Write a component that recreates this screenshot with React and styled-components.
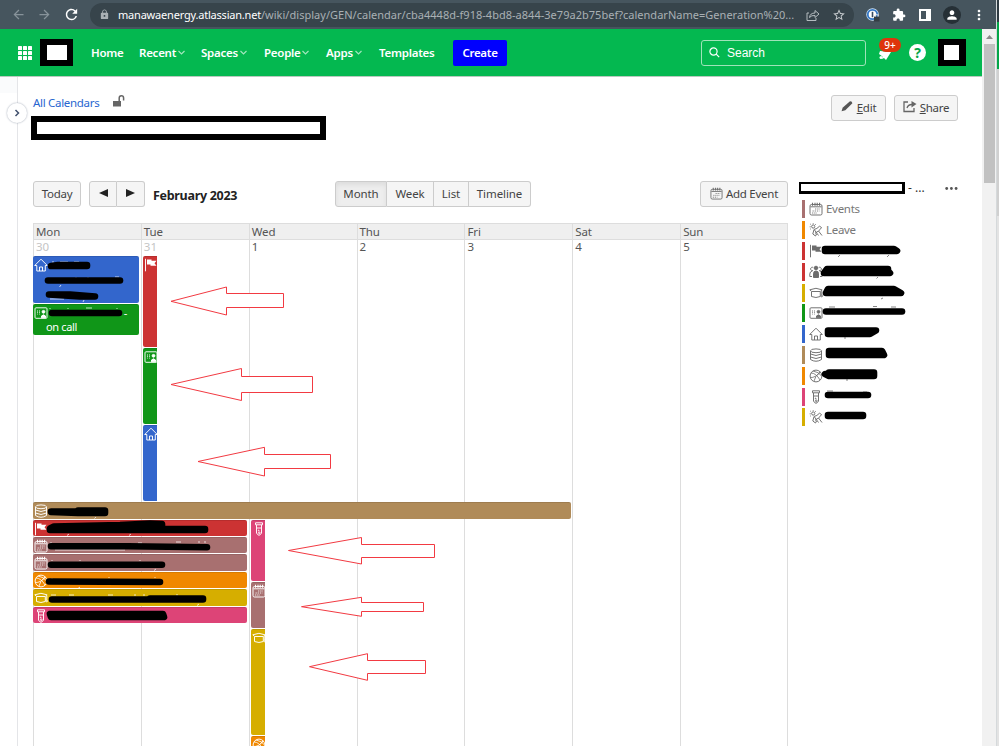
import React from 'react'
import styled, { createGlobalStyle } from 'styled-components'
import { MdArrowBack, MdArrowForward, MdRefresh, MdLock, MdStarBorder, MdExtension, MdPerson, MdMoreVert } from 'react-icons/md'

const GlobalStyle = createGlobalStyle`
  * { box-sizing: border-box; }
  body {
    margin: 0;
    overflow: hidden;
    background: #fff;
    font-family: 'Noto Sans', 'Open Sans', sans-serif;
    font-size: 12px;
    color: #333;
  }
  svg { display: block; flex: none; }
`

const Screen = styled.div`
  position: relative;
  display: flex;
  width: 999px;
  height: 746px;
  overflow: hidden;
`
const Browser = styled.div`
  width: 996px;
  display: flex;
  flex-direction: column;
`
const Edge = styled.div`
  width: 3px;
  border-left: 1px solid #d5d9db;
  background: linear-gradient(#2f3b42 0 22px, #04a648 22px 69px, #d0d0d0 69px 216px, #e3e3e3 216px);
`
const Toolbar = styled.div`
  height: 29px;
  display: flex;
  align-items: center;
  padding-left: 11px;
  background: #46555e;
  color: #fff;
`
const ToolIcon = styled.span`
  width: ${p => p.$w || 26}px;
  flex: none;
  display: flex;
  justify-content: center;
  color: ${p => p.$color || '#fff'};
`
const AddressBar = styled.div`
  width: 764px;
  height: 24px;
  margin: 0 5px 0 0;
  padding-left: 8px;
  display: flex;
  align-items: center;
  border-radius: 12px;
  background: #37444b;
  color: #a9b0b4;
`
const Url = styled.div`
  width: 685px;
  flex: none;
  margin: -1px 0 0 7px;
  white-space: nowrap;
  letter-spacing: 0.02px;
  font-size: 11px;
`
const Host = styled.span`
  color: #fff;
  letter-spacing: -0.2px;
`
const Avatar = styled.span`
  width: 18px;
  height: 18px;
  display: flex;
  align-items: center;
  justify-content: center;
  border-radius: 50%;
  background: #263036;
`
const Viewport = styled.div`
  flex: 1;
  display: flex;
  min-height: 0;
`
const Site = styled.div`
  width: 982px;
  display: flex;
  flex-direction: column;
`
const Scrollbar = styled.div`
  width: 14px;
  padding: 6px 1px 0 2px;
  display: flex;
  flex-direction: column;
  align-items: center;
  background: #f1f1f1;
`
const Thumb = styled.div`
  width: 11px;
  height: 139px;
  margin-top: 5px;
  background: #c1c1c1;
`
const Header = styled.header`
  height: 48px;
  flex: none;
  padding-left: 18px;
  display: flex;
  align-items: center;
  background: #04b850;
  border-bottom: 1px solid #b9c9bf;
  color: #fff;
`
const Blackout = styled.div`
  width: ${p => p.$w}px;
  height: ${p => p.$h}px;
  flex: none;
  margin-left: ${p => p.$ml || 0}px;
  margin-right: ${p => p.$mr || 0}px;
  border-style: solid;
  border-color: #000;
  border-width: ${p => p.$b || '6px'};
  background: #fff;
`
const Nav = styled.nav`
  display: flex;
  align-items: center;
  margin-left: 18px;
`
const NavItem = styled.span`
  width: ${p => p.$w}px;
  display: flex;
  align-items: center;
  justify-content: space-between;
  margin-right: ${p => p.$gap}px;
  font-size: 11.5px;
  font-weight: 600;
  letter-spacing: -0.25px;
  white-space: nowrap;
`
const CreateButton = styled.button`
  width: 54px;
  height: 26px;
  padding: 0;
  border: 0;
  border-radius: 2px;
  background: #0000fe;
  color: #fff;
  font: 600 11.5px 'Noto Sans', sans-serif;
  letter-spacing: -0.3px;
`
const SearchBox = styled.div`
  width: 165px;
  height: 26px;
  margin-left: auto;
  padding-left: 7px;
  display: flex;
  align-items: center;
  gap: 7px;
  border: 1px solid #9fe3b9;
  border-radius: 3px;
  font: 12px 'Liberation Sans', sans-serif;
`
const Notify = styled.span`
  position: relative;
  width: 20px;
  height: 20px;
  margin-left: 11px;
`
const Badge = styled.span`
  position: absolute;
  left: 2px;
  top: -5px;
  width: 22px;
  height: 14px;
  border-radius: 7px;
  background: #de350b;
  font-size: 10px;
  font-weight: 500;
  line-height: 14px;
  text-align: center;
`
const Help = styled.span`
  width: 17px;
  height: 17px;
  margin: 0 12px 0 12px;
  border-radius: 50%;
  background: #fff;
  color: #04a648;
  font-size: 14px;
  font-weight: 700;
  line-height: 17px;
  text-align: center;
`
const Body = styled.div`
  flex: 1;
  display: flex;
  min-height: 0;
`
const SideRail = styled.aside`
  position: relative;
  width: 18px;
  border-right: 1px solid #e4e5e8;
  background: linear-gradient(#fafbfc 0 16px, #fff 16px);
`
const Expand = styled.span`
  position: absolute;
  left: 7px;
  top: 26px;
  width: 20px;
  height: 20px;
  display: flex;
  align-items: center;
  justify-content: center;
  border-radius: 50%;
  background: #fff;
  box-shadow: 0 0 2px rgba(9, 30, 66, 0.4);
`
const Main = styled.main`
  flex: 1;
  display: flex;
  flex-direction: column;
  padding-left: 13px;
`
const PageTop = styled.div`
  display: flex;
  justify-content: space-between;
  height: 103px;
  padding: 18px 24px 0 0;
`
const Crumb = styled.div`
  display: flex;
  gap: 14px;
  height: 21px;
  padding-left: 2px;
  color: #2866d0;
  line-height: 16px;
  font-size: 11.5px;
  letter-spacing: -0.3px;
`
const Actions = styled.div`
  display: flex;
  gap: 8px;
`
const Button = styled.button`
  width: ${p => p.$w}px;
  height: 26px;
  padding: 0 0 1px;
  display: flex;
  align-items: center;
  justify-content: center;
  gap: 3px;
  border: 1px solid #ccc;
  border-radius: 3px;
  background: #f5f5f5;
  color: #444;
  font: 11.5px 'Noto Sans', sans-serif;
  letter-spacing: ${p => p.$ls || -0.25}px;
  white-space: nowrap;
`
const ButtonGroup = styled.div`
  display: flex;
  margin-left: ${p => p.$ml || 0}px;
  & > button { border-radius: 0; }
  & > button + button { border-left: 0; }
  & > button:first-child { border-radius: 3px 0 0 3px; }
  & > button:last-child { border-radius: 0 3px 3px 0; }
`
const ViewButton = styled(Button)`
  background: ${p => (p.$on ? '#eee' : '#f5f5f5')};
  box-shadow: ${p => (p.$on ? 'inset 0 3px 5px #ddd' : 'none')};
  letter-spacing: -0.1px;
`
const AddButton = styled(Button)`
  margin-left: auto;
`
const Columns = styled.div`
  flex: 1;
  display: flex;
  padding-left: 2px;
  min-height: 0;
`
const Calendar = styled.section`
  width: 755px;
  display: flex;
  flex-direction: column;
`
const CalendarBar = styled.div`
  display: flex;
  align-items: center;
  height: 43px;
  flex: none;
  padding-bottom: 16px;
`
const MonthTitle = styled.h2`
  width: 190px;
  margin: 3px 0 0;
  padding-left: 8px;
  font-size: 12.5px;
  font-weight: 700;
  letter-spacing: -0.3px;
  color: #222;
`
const Days = styled.div`
  display: grid;
  grid-template-columns: repeat(7, 1fr);
  grid-area: 1 / 1;
`
const WeekHead = styled(Days)`
  height: 17px;
  flex: none;
  background: #efefef;
  border: solid #ddd;
  border-width: 1px 0;
`
const DayName = styled.span`
  padding-left: 2px;
  border-left: 1px solid #ddd;
  color: #555;
  font-size: 11.5px;
  letter-spacing: -0.1px;
  line-height: 15px;
  &:last-child { border-right: 1px solid #ddd; }
`
const Day = styled.div`
  padding-left: 2px;
  border-left: 1px solid #ddd;
  color: ${p => (p.$other ? '#c4c4c4' : '#555')};
  font-size: 11.5px;
  line-height: 14px;
  &:last-child { border-right: 1px solid #ddd; }
`
const Month = styled.div`
  flex: 1;
  display: grid;
  min-height: 0;
`
const Events = styled.div`
  grid-area: 1 / 1;
  padding-top: 16px;
  height: 507px;
  overflow: hidden;
`
const EventRow = styled.div`
  display: flex;
  align-items: flex-start;
  gap: 4px;
  height: ${p => p.$h}px;
`
const Stack = styled.div`
  width: ${p => p.$w}px;
  display: flex;
  flex-direction: column;
  gap: 1px;
`
const Event = styled.div`
  height: ${p => p.$h}px;
  width: ${p => (p.$w ? p.$w + 'px' : '100%')};
  flex: none;
  padding: 1px 0 0 1px;
  overflow: hidden;
  border-radius: ${p => (p.$cut ? '2px 0 0 2px' : '2px')};
  border-top: 1px solid rgba(0, 0, 0, 0.1);
  background: ${p => p.$color};
  color: #fff;
`
const EventText = styled.div`
  display: flex;
  justify-content: space-between;
  padding: ${p => p.$pad};
  font-size: 11px;
  letter-spacing: -0.35px;
  line-height: 14px;
  height: 14px;
`
const Legend = styled.section`
  width: 182px;
  padding-left: 11px;
`
const LegendHead = styled.div`
  display: flex;
  align-items: center;
  height: 16px;
  margin-bottom: 3px;
  font-size: 12px;
  & > span { margin-left: 3px; width: 37px; line-height: 16px; }
`
const LegendItem = styled.div`
  display: flex;
  align-items: center;
  height: 20.8px;
  padding-left: 3px;
  color: #777;
  font-size: 11.5px;
  letter-spacing: -0.3px;
`
const Swatch = styled.i`
  width: 3px;
  height: 18px;
  margin-right: 4px;
  background: ${p => p.$color};
`
const LegendName = styled.span`
  margin: -2px 0 0 3px;
`
const Markup = styled.svg`
  position: absolute;
  left: 0;
  top: 0;
  pointer-events: none;
`

const colors = {
  mauve: '#a87070',
  orange: '#f08800',
  red: '#cc3333',
  yellow: '#d6ae00',
  green: '#109618',
  blue: '#3366cc',
  brown: '#b08b59',
  pink: '#dd4477',
}

const glyphs = {
  events: <><rect x="1" y="2.5" width="12" height="10.5" rx="1.5" /><path d="M1.500 4.800h11" /><path d="M3.500 .7v3M6 .7v3M8.200 .7v3M10.600 .7v3" strokeWidth="1.100" /><path d="M6 7h5M3.500 9h7M3 11h5" strokeDasharray="1.300 .9" opacity=".85" /></>,
  leave: <><circle cx="4.200" cy="3.500" r="1.600" /><path d="M4.200 .3v.8M1.300 1l.7.7M.7 3.800h1M7 1l-.7.7M1.300 6.200l.7-.7" /><path d="M5 6.500Q8 6 10.500 3.200L12.500 4.500Q11 7 9.500 8l3.500 4.500M5 6.500l-1.200 4.500L6.500 13l1-2-1.200-1L9.500 8M5.500 7l4 5.500" /></>,
  flag: <><path d="M1.500 .8v12.500" /><path d="M3 1.500h4.500v1.300H12.500l-2 2.400 2 2.500H6.500V6.500H3z" fill="currentColor" stroke="none" /></>,
  group: <><circle cx="7" cy="3" r="1.800" fill="currentColor" /><path d="M4.500 12.500V8.500Q4.500 6 7 6t2.500 2.500v4z" fill="currentColor" /><path d="M4 5.500a1.700 1.700 0 1 1 .2-3M10 5.500a1.700 1.700 0 1 0-.2-3M3 11.500H.8V9q0-2.500 2.500-3M11 11.500h2.200V9q0-2.500-2.500-3" /></>,
  cap: <><path d="M.8 3.800Q7 .8 13 3.800L11.300 5.500H2.700zM2.500 5.700v4.800Q7 12.500 11.300 10.500V5.700M12.800 4.500V9" /><circle cx="12.700" cy="10" r=".8" /></>,
  card: <><rect x="1" y="1.800" width="12" height="10.500" rx="1" /><path d="M3.500 4.500v4M5.500 4.500v4" strokeDasharray="1 .8" /><circle cx="9.500" cy="5.800" r="1.400" fill="currentColor" /><path d="M7.500 11.800V10q2-2.300 4 0v1.800z" fill="currentColor" /></>,
  home: <path d="M.7 7.500 7 1.200l6.300 6.300h-2V13H2.800V7.500zM5.500 13V9h3v4" />,
  data: <><ellipse cx="7" cy="2.800" rx="5.500" ry="1.900" /><path d="M1.500 3v8.500q5.500 3.500 11 0V3M1.500 6q5.500 3 11 0M1.500 9q5.500 3 11 0" /></>,
  ball: <><circle cx="7" cy="7" r="5.900" /><path d="M2 4q5 0 9 7M4 2q6 1 8.500 5M1.500 8.500Q6 9 11.500 3M5 12q1-5 6-9" strokeWidth=".8" /></>,
  tube: <><path d="M3.500 .8h7v2h-7zM4.500 3v8q2.500 4.500 5 0V3M5 6h4" /><circle cx="6.700" cy="8.500" r=".4" /><circle cx="7.300" cy="10.800" r=".8" /></>,
}

const Glyph = ({ name, size = 14, color = '#6c6c6c' }) => (
  <svg width={size} height={size} viewBox="0 0 14 14" fill="none" color={color} stroke="currentColor" strokeWidth="0.95">
    {glyphs[name]}
  </svg>
)

const White = ({ name }) => <Glyph name={name} color="#fff" />

const Chevron = () => (
  <svg width="7" height="5" viewBox="0 0 7 5" fill="none" stroke="#a2e7bc" strokeWidth="1.200"><path d="M.5 1l3 3 3-3" /></svg>
)

const nav = [
  { label: 'Home', w: 33, gap: 15 },
  { label: 'Recent', w: 46, gap: 16, menu: true },
  { label: 'Spaces', w: 46, gap: 17, menu: true },
  { label: 'People', w: 45, gap: 17, menu: true },
  { label: 'Apps', w: 36, gap: 17, menu: true },
  { label: 'Templates', w: 54, gap: 20 },
]

const week = [
  ['Mon', 30, true],
  ['Tue', 31, true],
  ['Wed', 1],
  ['Thu', 2],
  ['Fri', 3],
  ['Sat', 4],
  ['Sun', 5],
]

const longEvents = [
  ['flag', 'red'],
  ['events', 'mauve'],
  ['events', 'mauve'],
  ['ball', 'orange'],
  ['cap', 'yellow'],
  ['tube', 'pink'],
]

const legend = [
  ['events', 'mauve', 'Events'],
  ['leave', 'orange', 'Leave'],
  ['flag', 'red'],
  ['group', 'red'],
  ['cap', 'yellow'],
  ['card', 'green'],
  ['home', 'blue'],
  ['data', 'brown'],
  ['ball', 'orange'],
  ['tube', 'pink'],
  ['leave', 'yellow'],
]

// tip x, tip y, head x, head top, shaft top, right, shaft bottom, head bottom
const arrows = [
  [171, 301.3, 226.5, 287, 293.5, 283.5, 307.5, 315],
  [171, 384.5, 241.5, 368.5, 376.5, 312.5, 392.5, 400.5],
  [198, 461.5, 264.5, 447.3, 454.5, 330.5, 468.5, 476],
  [288.5, 550.5, 361.5, 537.5, 544.5, 434.5, 557.5, 564],
  [301.5, 606.7, 361.5, 597.3, 602.5, 423.5, 611.5, 616.3],
  [309.5, 666.7, 367.5, 653.7, 660.5, 425.5, 673.5, 680.3],
]

const scribbles = [
  'M51 266L58 265H87V266H52',
  'M48 280.5H120',
  'M49 294.5H70L95 296.500H80L49 294.5',
  'M52 313H119',
  'M51 511.5H78V510.5H105V513H78L51 512',
  'M50 528.5L54 526.5L120 525L150 523.5L162 524V529H205V530L50 530Z',
  'M51 546.3H128L207 547.3',
  'M51 564.7H162',
  'M49 581.5L160 582',
  'M52 599.5H203V598.5H150',
  'M50 614H163L164 617H51Z',
  'M825 249H894L897 251H825Z',
  'M827 269H888V271L890 273H824Z',
  'M828 289H894L901 293H826Z',
  'M826 311.500H902',
  'M828 330.5H876L870 334H828Z',
  'M829 351H882L884 355H829Z',
  'M825 374H829V372.5H874V376H829Z',
  'M828 395H868',
  'M828 415H863V416H828Z',
]

// bits of lettering left uncovered around the scribbles
const whiteSpecks = 'M52 262h2M60 262h8M74 262h5M61 285l-1.500 2M76 277v1M88 277v1M115 277h4M50 299h14M84 300l-1 2M50 308v1M68 308v1M86 308h6M117 308v1M82 508v1M87 508v1M96 517l-1.500 1.500M69 534l-2 1.500M131 534l-2 1.500M50 543h2M57 543v1M138 543h4M176 542h5M199 541v2M205 541v2M55 550h70M52 560v1M80 560v1M140 560v1M156 569l-2 1.500M52 578v1M109 577v1M155 577v1M80 587l-2 1.500M51 595h5M69 595h5M108 595h5M135 594v2M144 594v2M177 594v2M199 604l-2 1.500'
const graySpecks = 'M840 255l-2 2M889 255l-2 2M878 277l-1.500 1.500M883 298l-2 1M829 307h6M873 306.500h4M891 307h5M845 337v2M847 379v2M827 391h6M864 391v1M866 391v1'

const App = () => (
  <>
    <GlobalStyle />
    <Screen>
      <Browser>
        <Toolbar>
          <ToolIcon $w={14} $color="#87939a"><MdArrowBack size={15} /></ToolIcon>
          <ToolIcon $w={38} $color="#87939a"><MdArrowForward size={15} /></ToolIcon>
          <ToolIcon $w={17}><MdRefresh size={17} /></ToolIcon>
          <ToolIcon $w={10} />
          <AddressBar>
            <ToolIcon $w={13} $color="#a9b0b4"><MdLock size={11} /></ToolIcon>
            <Url>
              <Host>manawaenergy.atlassian.net</Host>/wiki/display/GEN/calendar/cba4448d-f918-4bd8-a844-3e79a2b75bef?calendarName=Generation%20...
            </Url>
            <ToolIcon $w={20} $color="#b5bcc0">
              <svg width="14" height="14" viewBox="0 0 14 14" fill="none" stroke="currentColor" strokeWidth="1"><path d="M3 5H1v7.500h9V10M3.500 9.500Q4 5 9 5V2.500L13 6 9 9.500V7.500Q5.500 7 3.500 9.500z" /></svg>
            </ToolIcon>
            <ToolIcon $w={32} $color="#c5cacd"><MdStarBorder size={14} /></ToolIcon>
          </AddressBar>
          <ToolIcon $w={27}>
            <svg width="14" height="14" viewBox="0 0 14 14"><circle cx="6.500" cy="6.500" r="6.200" fill="#d6e9fb" /><circle cx="6.500" cy="6.500" r="4.700" fill="#fff" stroke="#3477c4" strokeWidth="1.800" /><path d="M6.500 3.800v5.400" stroke="#34495e" strokeWidth="1.600" /><rect x="8" y="8.500" width="5.500" height="5" fill="#333d43" /><path d="M9.200 8.500V7.200q1.500-1.500 3 0v1.300" fill="none" stroke="#ddd" /></svg>
          </ToolIcon>
          <ToolIcon><MdExtension size={14} /></ToolIcon>
          <ToolIcon>
            <svg width="12" height="12" viewBox="0 0 12 12"><path d="M0 0h12v12H0zM2 2v8h5V2z" fill="#fff" fillRule="evenodd" /></svg>
          </ToolIcon>
          <ToolIcon $w={28}><Avatar><MdPerson size={14} /></Avatar></ToolIcon>
          <ToolIcon><MdMoreVert size={16} /></ToolIcon>
        </Toolbar>
        <Viewport>
          <Site>
            <Header>
              <svg width="14" height="14" viewBox="0 0 14 14" fill="#fff">
                {[0, 5, 10].map(y => [0, 5, 10].map(x => <rect key={x + '-' + y} x={x} y={y} width="4" height="4" rx="0.6" />))}
              </svg>
              <Blackout $w={33} $h={27} $ml={8} $b="6px 6px 6px 7px" />
              <Nav>
                {nav.map(item => (
                  <NavItem key={item.label} $w={item.w} $gap={item.gap}>
                    {item.label}
                    {item.menu && <Chevron />}
                  </NavItem>
                ))}
                <CreateButton>Create</CreateButton>
              </Nav>
              <SearchBox>
                <svg width="11" height="11" viewBox="0 0 11 11" fill="none" stroke="#fff" strokeWidth="1.200"><circle cx="4.500" cy="4.500" r="3.600" /><path d="M7.200 7.200l3 3" /></svg>
                Search
              </SearchBox>
              <Notify>
                <svg width="20" height="20" viewBox="0 0 20 20" fill="#fff"><path d="M3 8l11 1-5 8-2-2-2 1 .5-2.500L2 11z" /><circle cx="4" cy="14.500" r="1.500" /></svg>
                <Badge>9+</Badge>
              </Notify>
              <Help>?</Help>
              <Blackout $w={28} $h={27} $mr={16} $b="6px 7px 6px 6px" />
            </Header>
            <Body>
              <SideRail>
                <Expand>
                  <svg width="6" height="8" viewBox="0 0 6 8" fill="none" stroke="#42526e" strokeWidth="1.500"><path d="M1.500 1l3 3-3 3" /></svg>
                </Expand>
              </SideRail>
              <Main>
                <PageTop>
                  <div>
                    <Crumb>
                      All Calendars
                      <svg width="12" height="13" viewBox="0 0 12 13"><path d="M0 6h8v5.500H0z" fill="#666" /><path d="M6.200 6V3q0-2.200 2.200-2.200T10.600 3v2.500" fill="none" stroke="#666" strokeWidth="1.500" /></svg>
                    </Crumb>
                    <Blackout $w={295} $h={24} />
                  </div>
                  <Actions>
                    <Button $w={55}>
                      <svg width="13" height="13" viewBox="0 0 12 12" fill="#555"><path d="M.5 9.500l1-3.300 6.500-5.700q2-.7 2.500 1.500L4 8.500z" /></svg>
                      <span><u>E</u>dit</span>
                    </Button>
                    <Button $w={64}>
                      <svg width="14" height="15" viewBox="0 0 14 15" fill="none" stroke="#666" strokeWidth="1.300"><path d="M5 2H1v9.500h10V8M4 8q1-3.500 5-3.500" /><path d="M8.500 1l5 3-5 3.500z" fill="#666" stroke="none" /></svg>
                      <span><u>S</u>hare</span>
                    </Button>
                  </Actions>
                </PageTop>
                <Columns>
                  <Calendar>
                    <CalendarBar>
                      <Button $w={48}>Today</Button>
                      <ButtonGroup $ml={8}>
                        <Button $w={28}><svg width="9" height="8" viewBox="0 0 9 8"><path d="M9 0v8L0 4z" fill="#222" /></svg></Button>
                        <Button $w={28}><svg width="9" height="8" viewBox="0 0 9 8"><path d="M0 0v8l9-4z" fill="#222" /></svg></Button>
                      </ButtonGroup>
                      <MonthTitle>February 2023</MonthTitle>
                      <ButtonGroup>
                        <ViewButton $w={52} $on>Month</ViewButton>
                        <ViewButton $w={47}>Week</ViewButton>
                        <ViewButton $w={35}>List</ViewButton>
                        <ViewButton $w={62}>Timeline</ViewButton>
                      </ButtonGroup>
                      <AddButton $w={88}>
                        <Glyph name="events" size={13} />
                        Add Event
                      </AddButton>
                    </CalendarBar>
                    <WeekHead>
                      {week.map(([name]) => <DayName key={name}>{name}</DayName>)}
                    </WeekHead>
                    <Month>
                      <Days>
                        {week.map(([name, date, other]) => <Day key={name} $other={other}>{date}</Day>)}
                      </Days>
                      <Events>
                        <EventRow $h={246}>
                          <Stack $w={106}>
                            <Event $color={colors.blue} $h={47}><White name="home" /></Event>
                            <Event $color={colors.green} $h={31}>
                              <EventText $pad="0 12px 0 0"><White name="card" /><span>-</span></EventText>
                              <EventText $pad="0 0 0 12px">on call</EventText>
                            </Event>
                          </Stack>
                          <Stack $w={14}>
                            <Event $cut $color={colors.red} $h={91}><White name="flag" /></Event>
                            <Event $cut $color={colors.green} $h={76}><White name="card" /></Event>
                            <Event $cut $color={colors.blue} $h={76}><White name="home" /></Event>
                          </Stack>
                        </EventRow>
                        <EventRow $h={17.6}>
                          <Event $color={colors.brown} $w={537.5} $h={17}><White name="data" /></Event>
                        </EventRow>
                        <EventRow $h={230}>
                          <Stack $w={214}>
                            {longEvents.map(([icon, color], i) => (
                              <Event key={i} $color={colors[color]} $h={16.45}><White name={icon} /></Event>
                            ))}
                          </Stack>
                          <Stack $w={14}>
                            <Event $cut $color={colors.pink} $h={61}><White name="tube" /></Event>
                            <Event $cut $color={colors.mauve} $h={46}><White name="events" /></Event>
                            <Event $cut $color={colors.yellow} $h={106}><White name="cap" /></Event>
                            <Event $cut $color={colors.orange} $h={40}><White name="ball" /></Event>
                          </Stack>
                        </EventRow>
                      </Events>
                    </Month>
                  </Calendar>
                  <Legend>
                    <LegendHead>
                      <Blackout $w={106} $h={12} $b="2px 3px 3px 2px" />
                      <span>- ...</span>
                      <svg width="13" height="3" viewBox="0 0 13 3" fill="#555"><circle cx="1.700" cy="1.500" r="1.400" /><circle cx="6.400" cy="1.500" r="1.400" /><circle cx="11.100" cy="1.500" r="1.400" /></svg>
                    </LegendHead>
                    {legend.map(([icon, color, label], i) => (
                      <LegendItem key={i}>
                        <Swatch $color={colors[color]} />
                        <Glyph name={icon} />
                        <LegendName>{label}</LegendName>
                      </LegendItem>
                    ))}
                  </Legend>
                </Columns>
              </Main>
            </Body>
          </Site>
          <Scrollbar>
            <svg width="7" height="4" viewBox="0 0 7 4"><path d="M0 4l3.500-4L7 4z" fill="#8a8a8a" /></svg>
            <Thumb />
          </Scrollbar>
        </Viewport>
      </Browser>
      <Edge />
      <Markup width="999" height="746" viewBox="0 0 999 746" fill="none">
        <path d={whiteSpecks} stroke="#fff" strokeWidth="1" opacity="0.75" />
        <path d={graySpecks} stroke="#888" strokeWidth="1" />
        {scribbles.map(d => (
          <path key={d} d={d} fill="#000" stroke="#000" strokeWidth="6.600" strokeLinecap="round" strokeLinejoin="round" />
        ))}
        {arrows.map(([x, y, hx, ht, st, r, sb, hb]) => (
          <path key={y} d={`M${x} ${y}L${hx} ${ht}V${st}H${r}V${sb}H${hx}V${hb}Z`} fill="#fff" stroke="#f23a42" strokeWidth="1" />
        ))}
      </Markup>
    </Screen>
  </>
)

export default App
